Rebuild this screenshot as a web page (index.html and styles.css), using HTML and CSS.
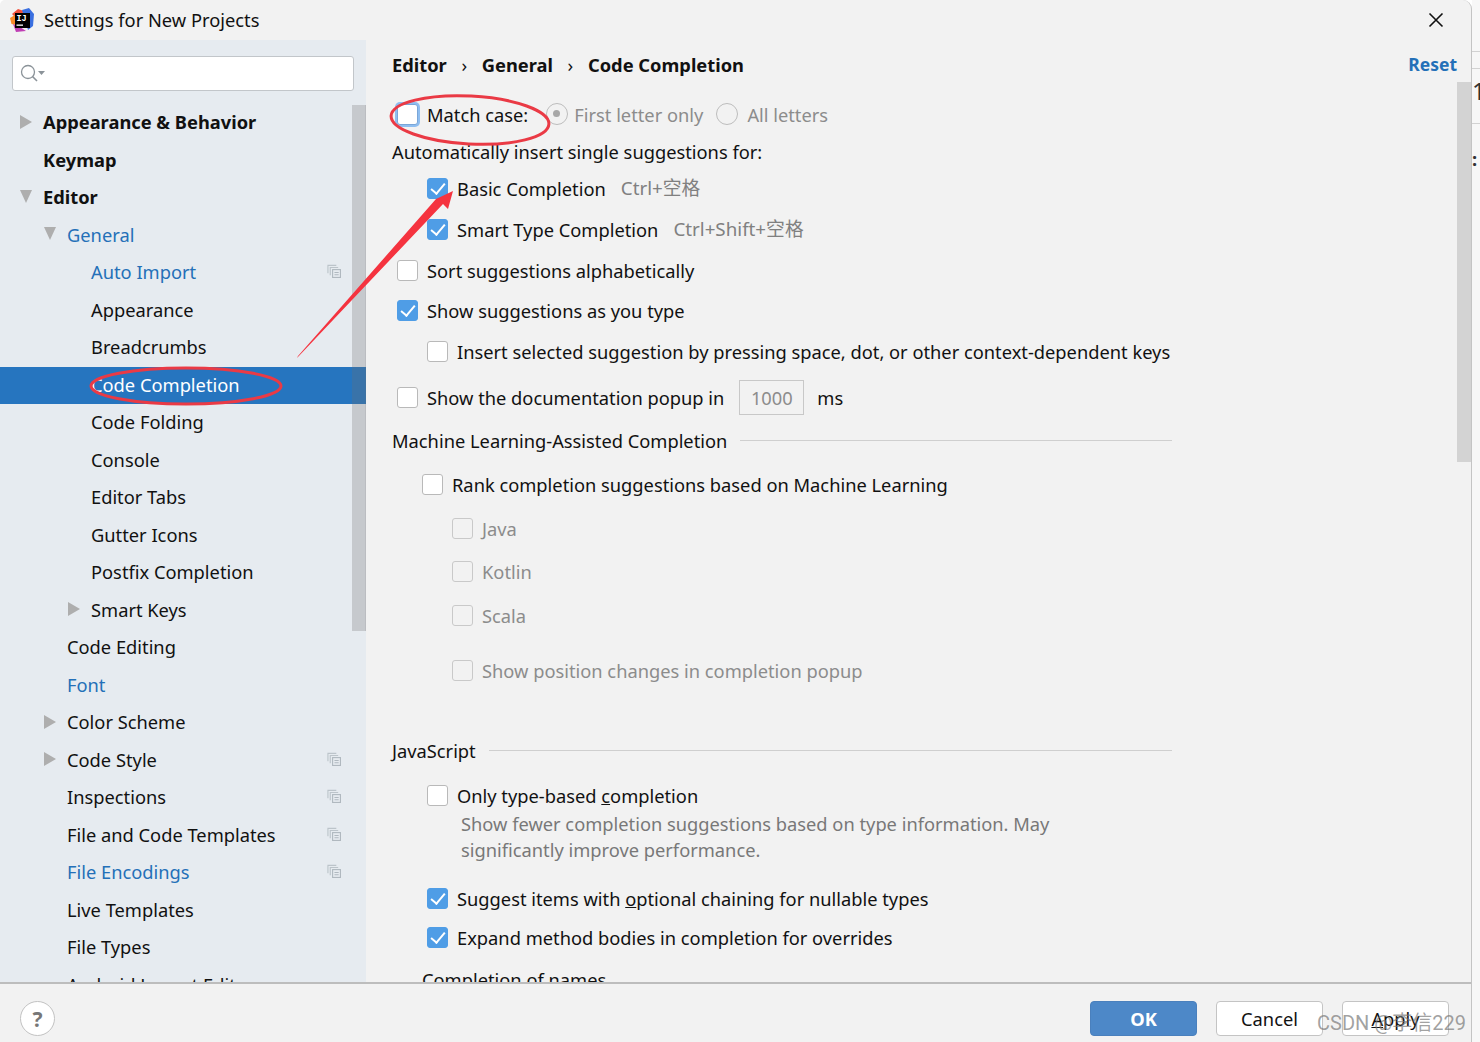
FILE: index.html
```html
<!DOCTYPE html>
<html lang="en">
<head>
<meta charset="utf-8">
<title>Settings for New Projects</title>
<link rel="stylesheet" href="styles.css">
</head>
<body>
<div class="desktop">
  <div class="window">
    <header class="titlebar">
      <svg class="logo" width="24" height="24" viewBox="0 0 24 24">
        <path d="M2 6 L8 1 L14 3 L8 12Z" fill="#f0503c"/>
        <path d="M0 10 L5 7 L6 17 L1.5 16Z" fill="#f98b2a"/>
        <path d="M3 16 L10 19 L16 23 L6 24Z" fill="#c03fb4"/>
        <path d="M12 2 L19 0 L24 6 L23 18 L18 22Z" fill="#3a6fe0"/>
        <rect x="5" y="5" width="15" height="15" fill="#000"/>
        <text x="6.5" y="13" class="logo-text">IJ</text>
        <rect x="6.5" y="16.5" width="6.5" height="1.3" fill="#fff"/>
      </svg>
      <span class="title">Settings for New Projects</span>
      <svg class="close" width="16" height="16" viewBox="0 0 16 16"><path d="M1.5 1.5 L14.5 14.5 M14.5 1.5 L1.5 14.5" stroke="#111" stroke-width="1.6" fill="none"/></svg>
    </header>
    <div class="content">
      <aside class="sidebar">
        <div class="search">
          <svg width="26" height="20" viewBox="0 0 26 20"><circle cx="8" cy="8" r="6.5" fill="none" stroke="#8b9399" stroke-width="1.3"/><path d="M12.5 12.5 L17 17" stroke="#8b9399" stroke-width="1.6"/><path d="M18 7 H25 L21.5 11Z" fill="#8b9399"/></svg>
        </div>
        <nav class="tree">
          <div class="node l0 bold"><i class="arrow closed"></i>Appearance &amp; Behavior</div>
          <div class="node l0 bold"><i class="arrow"></i>Keymap</div>
          <div class="node l0 bold"><i class="arrow open"></i>Editor</div>
          <div class="node l1 link"><i class="arrow open"></i>General</div>
          <div class="node l2 link"><i class="arrow"></i>Auto Import<svg class="copy" viewBox="0 0 15 15"><use href="#copy-icon"/></svg></div>
          <div class="node l2"><i class="arrow"></i>Appearance</div>
          <div class="node l2"><i class="arrow"></i>Breadcrumbs</div>
          <div class="node l2 selected"><i class="arrow"></i>Code Completion</div>
          <div class="node l2"><i class="arrow"></i>Code Folding</div>
          <div class="node l2"><i class="arrow"></i>Console</div>
          <div class="node l2"><i class="arrow"></i>Editor Tabs</div>
          <div class="node l2"><i class="arrow"></i>Gutter Icons</div>
          <div class="node l2"><i class="arrow"></i>Postfix Completion</div>
          <div class="node l2"><i class="arrow closed"></i>Smart Keys</div>
          <div class="node l1"><i class="arrow"></i>Code Editing</div>
          <div class="node l1 link"><i class="arrow"></i>Font</div>
          <div class="node l1"><i class="arrow closed"></i>Color Scheme</div>
          <div class="node l1"><i class="arrow closed"></i>Code Style<svg class="copy" viewBox="0 0 15 15"><use href="#copy-icon"/></svg></div>
          <div class="node l1"><i class="arrow"></i>Inspections<svg class="copy" viewBox="0 0 15 15"><use href="#copy-icon"/></svg></div>
          <div class="node l1"><i class="arrow"></i>File and Code Templates<svg class="copy" viewBox="0 0 15 15"><use href="#copy-icon"/></svg></div>
          <div class="node l1 link"><i class="arrow"></i>File Encodings<svg class="copy" viewBox="0 0 15 15"><use href="#copy-icon"/></svg></div>
          <div class="node l1"><i class="arrow"></i>Live Templates</div>
          <div class="node l1"><i class="arrow"></i>File Types</div>
          <div class="node l1"><i class="arrow"></i>Android Layout Editor</div>
        </nav>
        <div class="side-thumb"></div>
      </aside>
      <main class="main">
        <div class="crumbs">
          <span>Editor</span><span class="sep">›</span><span>General</span><span class="sep">›</span><span>Code Completion</span>
          <a class="reset">Reset</a>
        </div>
        <div class="form">
          <div class="row p5"><span class="cb focus"></span>Match case:<span class="radio-group muted"><span class="radio on"></span>First letter only<span class="radio second"></span>All letters</span></div>
          <div class="row">Automatically insert single suggestions for:</div>
          <div class="row p35"><span class="cb on"></span>Basic Completion<span class="hint">Ctrl+空格</span></div>
          <div class="row p35"><span class="cb on"></span>Smart Type Completion<span class="hint">Ctrl+Shift+空格</span></div>
          <div class="row p5"><span class="cb"></span>Sort suggestions alphabetically</div>
          <div class="row p5"><span class="cb on"></span>Show suggestions as you type</div>
          <div class="row p35"><span class="cb"></span>Insert selected suggestion by pressing space, dot, or other context-dependent keys</div>
          <div class="row p5"><span class="cb"></span>Show the documentation popup in<span class="field">1000</span>ms</div>
          <div class="row section">Machine Learning-Assisted Completion</div>
          <div class="row p30"><span class="cb"></span>Rank completion suggestions based on Machine Learning</div>
          <div class="row p60 muted"><span class="cb off"></span>Java</div>
          <div class="row p60 muted"><span class="cb off"></span>Kotlin</div>
          <div class="row p60 muted"><span class="cb off"></span>Scala</div>
          <div class="row p60 muted"><span class="cb off"></span>Show position changes in completion popup</div>
          <div class="row section">JavaScript</div>
          <div class="row p35"><span class="cb"></span><span>Only type-based <u>c</u>ompletion</span></div>
          <div class="row p69 comment">Show fewer completion suggestions based on type information. May</div>
          <div class="row p69 comment">significantly improve performance.</div>
          <div class="row p35"><span class="cb on"></span><span>Suggest items with <u>o</u>ptional chaining for nullable types</span></div>
          <div class="row p35"><span class="cb on"></span>Expand method bodies in completion for overrides</div>
          <div class="row p30">Completion of names</div>
        </div>
        <div class="main-thumb"></div>
      </main>
    </div>
    <footer class="footer">
      <span class="help">?</span>
      <span class="buttons">
        <button class="btn primary">OK</button>
        <button class="btn">Cancel</button>
        <button class="btn"><u>A</u>pply</button>
      </span>
    </footer>
  </div>
  <div class="strip">
    <span class="strip-line line-a"></span>
    <span class="strip-line line-b"></span>
    <span class="strip-line line-c"></span>
    <span class="strip-one">1</span>
    <span class="strip-dots">:</span>
  </div>
</div>

<svg class="defs" width="0" height="0">
  <symbol id="copy-icon" viewBox="0 0 15 15">
    <path d="M1 10 V1.5 H10" fill="none" stroke="#bcc4ca" stroke-width="1.2"/>
    <path d="M3.5 12 V3.8 H12" fill="none" stroke="#bcc4ca" stroke-width="1.2"/>
    <rect x="6" y="6" width="8.4" height="8.4" fill="none" stroke="#b0b8bf" stroke-width="1.2"/>
    <path d="M8 9 H12.5 M8 11.5 H12.5" stroke="#b0b8bf" stroke-width="1.1"/>
  </symbol>
</svg>

<svg class="marks" width="1480" height="1042" viewBox="0 0 1480 1042">
  <ellipse cx="470" cy="120" rx="79" ry="24" transform="rotate(3 470 120)" fill="none" stroke="#ea3a45" stroke-width="3"/>
  <ellipse cx="186" cy="386" rx="95" ry="18" fill="none" stroke="#ea3a45" stroke-width="3"/>
  <polygon points="297,358 298,356 436,199 453,191 448,209 443,204" fill="#f5333f"/>
</svg>
<div class="watermark">CSDN @李信229</div>
</body>
</html>
```

FILE: styles.css
```css
* { box-sizing: border-box; }
html, body { margin: 0; padding: 0; }
body {
  width: 1480px;
  height: 1042px;
  overflow: hidden;
  background: #fff;
  font-family: "Noto Sans", "Noto Sans CJK SC", sans-serif;
  font-size: 18.3px;
  color: #111;
  position: relative;
}
.desktop { display: flex; height: 1042px; }
.window {
  width: 1472px;
  height: 1042px;
  background: #f2f2f2;
  border-right: 1px solid #c4c4c4;
  border-top-right-radius: 9px;
  border-top-left-radius: 5px;
  display: flex;
  flex-direction: column;
  overflow: hidden;
}
.titlebar {
  height: 40px;
  flex: none;
  display: flex;
  align-items: center;
  padding: 0 27px 0 10px;
}
.logo { flex: none; margin-right: 10px; }
.logo-text { font: bold 8.5px "Liberation Mono", monospace; fill: #fff; }
.title { flex: 1; padding-bottom: 2px; }
.close { flex: none; }
.content { flex: 1; min-height: 0; display: flex; }
.sidebar {
  width: 366px;
  flex: none;
  background: #e6ebf0;
  padding-top: 16px;
  position: relative;
  overflow: hidden;
}
.search {
  height: 35px;
  margin: 0 12px;
  background: #fff;
  border: 1px solid #c2c6ca;
  border-radius: 3px;
  display: flex;
  align-items: center;
  padding-left: 7px;
}
.tree { margin-top: 13px; }
.node {
  height: 37.5px;
  padding-bottom: 2px;
  display: flex;
  align-items: center;
  position: relative;
}
.l0 { padding-left: 20px; }
.l1 { padding-left: 44px; }
.l2 { padding-left: 68px; }
.bold { font-weight: 700; }
.link { color: #2470b8; }
.selected { background: #2675bf; color: #fff; }
.arrow { flex: none; width: 23px; height: 14px; position: relative; }
.closed::before {
  content: "";
  position: absolute;
  left: 0;
  top: 0;
  border-left: 12px solid #aeaeae;
  border-top: 7px solid transparent;
  border-bottom: 7px solid transparent;
}
.open::before {
  content: "";
  position: absolute;
  left: 0;
  top: 0;
  border-top: 13px solid #aeaeae;
  border-left: 6.5px solid transparent;
  border-right: 6.5px solid transparent;
}
.copy { position: absolute; left: 327px; top: 10px; width: 14px; height: 14px; }
.side-thumb {
  position: absolute;
  left: 352px;
  top: 65px;
  width: 14px;
  height: 526px;
  background: rgba(110, 110, 110, .27);
  border-right: 1px solid rgba(110, 110, 110, .12);
}
.main {
  flex: 1;
  min-width: 0;
  position: relative;
  overflow: hidden;
  padding-left: 26px;
}
.crumbs {
  height: 48px;
  display: flex;
  align-items: center;
  font-weight: 700;
}
.sep { font-weight: 400; width: 35px; text-align: center; }
.reset {
  position: absolute;
  right: 14px;
  top: 12px;
  color: #2470b8;
  font-size: 17.5px;
}
.form {
  display: grid;
  grid-template-columns: 780px;
  margin-top: 13px;
  grid-template-rows: 37px 37px 41px 41px 40px 41px 46px 43px 44px 44px 43px 44px 55px 80px 45px 28px 26px 49px 39px 42px 26px;
  align-items: start;
}
.row { height: 26px; display: flex; align-items: center; white-space: nowrap; }
.p5 { padding-left: 5px; }
.p30 { padding-left: 30px; }
.p35 { padding-left: 35px; }
.p60 { padding-left: 60px; }
.p69 { padding-left: 69px; }
.muted { color: #8c8c8c; }
.comment { color: #787878; }
.cb {
  flex: none;
  width: 21px;
  height: 21px;
  margin-right: 9px;
  border: 1.5px solid #b9b9b9;
  border-radius: 3px;
  background: #fff;
  position: relative;
}
.cb.off { background: #f2f2f2; border-color: #c9c9c9; }
.cb.focus { box-shadow: 0 0 0 2px #8fbef0; border-color: #7aa6d8; }
.cb.on { background: #4f9de6; border-color: #4f9de6; }
.cb.on::after {
  content: "";
  position: absolute;
  left: 5.5px;
  top: 1.5px;
  width: 6px;
  height: 12px;
  border: solid #fff;
  border-width: 0 2.8px 2.8px 0;
  transform: rotate(40deg);
}
.radio-group { display: flex; align-items: center; margin-left: 18px; }
.radio {
  flex: none;
  width: 22px;
  height: 22px;
  border: 1.5px solid #bdbdbd;
  border-radius: 50%;
  margin-right: 6px;
  background: #f2f2f2;
  position: relative;
}
.radio.second { margin-left: 13px; margin-right: 9px; }
.radio.on::after {
  content: "";
  position: absolute;
  left: 6px;
  top: 6px;
  width: 7px;
  height: 7px;
  border-radius: 50%;
  background: #a8a8a8;
}
.hint { color: #808080; font-size: 18.8px; margin-left: 15px; margin-top: -3px; }
.field {
  width: 65px;
  height: 35px;
  margin: 0 13px 0 15px;
  border: 1.5px solid #c8c8c8;
  color: #8c8c8c;
  display: flex;
  align-items: center;
  justify-content: center;
}
.section { gap: 13px; }
.section::after { content: ""; flex: 1; height: 1px; background: #cfcfcf; }
.main-thumb {
  position: absolute;
  right: 0;
  top: 42px;
  width: 14px;
  height: 380px;
  background: #d3d3d3;
}
.footer {
  height: 60px;
  flex: none;
  border-top: 2px solid #bdbdbd;
  display: flex;
  align-items: center;
  justify-content: space-between;
  padding: 11px 22px 0 20px;
  background: #f2f2f2;
}
.help {
  width: 35px;
  height: 35px;
  border: 1.5px solid #c2c2c2;
  border-radius: 50%;
  background: #fff;
  color: #777;
  font-weight: 700;
  font-size: 21px;
  display: flex;
  align-items: center;
  justify-content: center;
}
.buttons { display: flex; gap: 19px; }
.btn {
  width: 107px;
  height: 35px;
  padding: 0;
  font: inherit;
  color: #111;
  background: #fff;
  border: 1.5px solid #c4c4c4;
  border-radius: 4px;
}
.btn.primary { background: #4d88c8; border-color: #4a80bd; color: #fff; font-weight: 700; }
.strip {
  width: 8px;
  height: 1042px;
  flex: none;
  background: #f7f7f7;
  position: relative;
  overflow: hidden;
  color: #333;
}
.strip-line { position: absolute; left: 0; right: 0; height: 1px; background: #d2d2d2; }
.line-a { top: 51px; }
.line-b { top: 68px; }
.line-c { top: 123px; }
.strip-one { position: absolute; left: 0; top: 76px; font-size: 24px; line-height: 30px; }
.strip-dots { position: absolute; left: 0; top: 146px; font-weight: 700; }
.defs { position: absolute; }
.marks { position: absolute; left: 0; top: 0; pointer-events: none; }
.watermark {
  position: absolute;
  left: 1317px;
  top: 1010px;
  font-family: Roboto, "Noto Sans CJK SC", sans-serif;
  font-size: 20px;
  line-height: 26px;
  color: rgba(120, 120, 120, .7);
  white-space: nowrap;
}
```
